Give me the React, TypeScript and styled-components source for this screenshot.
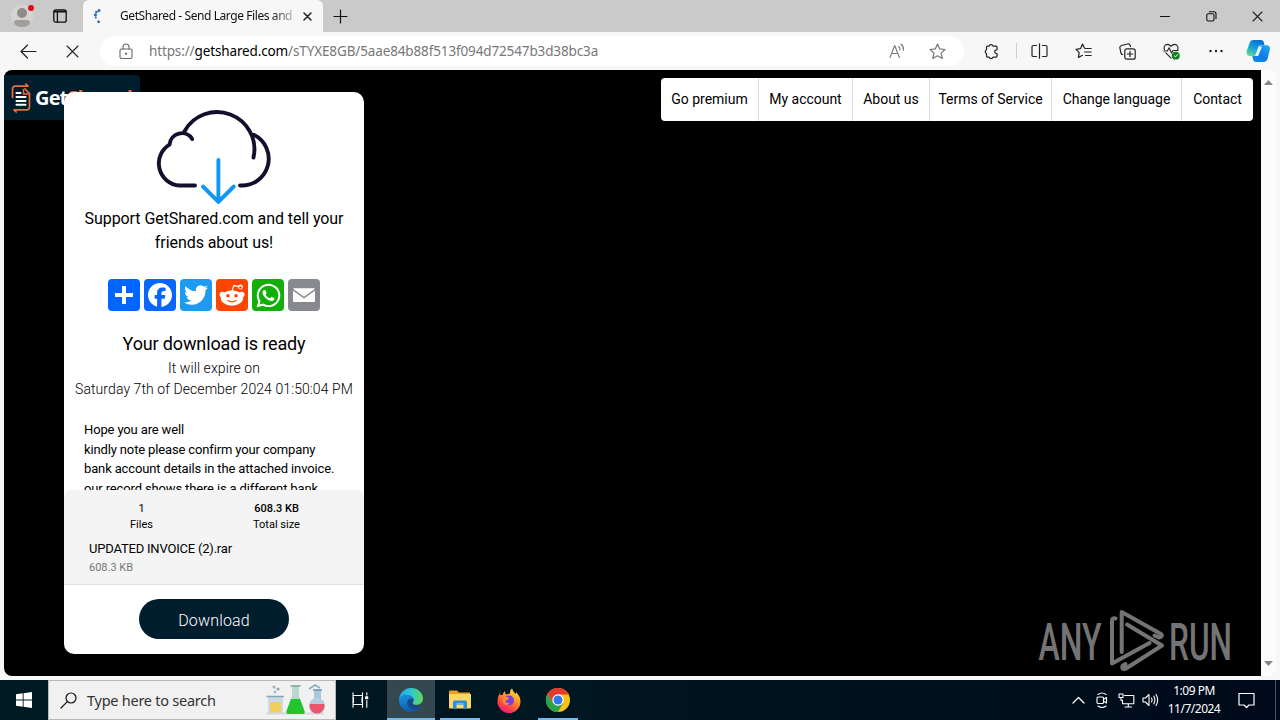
import React from "react";
import styled, { createGlobalStyle } from "styled-components";
import { FaWhatsapp } from "react-icons/fa";

const GlobalStyle = createGlobalStyle`
  * { box-sizing: border-box; }
  body { margin: 0; overflow: hidden; }
  svg { display: block; flex: none; }
`;

const segoe = `"Noto Sans", "Open Sans", sans-serif`;
const roboto = `Roboto, sans-serif`;

const Screen = styled.div`
  width: 1280px;
  height: 720px;
  display: flex;
  flex-direction: column;
  overflow: hidden;
  background: #f7f7f7;
  font-family: ${segoe};
  color: #000;
`;

/* Browser chrome */

const TabStrip = styled.div`
  height: 32px;
  display: flex;
  background: #cacaca;
`;

const Slot = styled.div<{ $w: number }>`
  width: ${(p) => p.$w}px;
  flex: none;
  display: flex;
  align-items: center;
  justify-content: center;
`;

const Tab = styled.div`
  width: 240px;
  margin-left: 7px;
  padding: 0 8px 0 6px;
  display: flex;
  align-items: center;
  background: #f7f7f7;
  border-radius: 6px 6px 0 0;
`;

const TabTitle = styled.div`
  width: 173px;
  margin: 0 7px 0 15px;
  overflow: hidden;
  white-space: nowrap;
  font-size: 12px;
  line-height: 20px;
  letter-spacing: -0.42px;
  background: linear-gradient(90deg, #111 88%, #bbb 100%);
  background-clip: text;
  color: transparent;
`;

const Spacer = styled.div`
  flex: 1;
`;

const Toolbar = styled.div`
  height: 38px;
  display: flex;
  align-items: center;
  padding-left: 6px;
`;

const AddressBar = styled.div`
  width: 864px;
  height: 30px;
  margin: 0 5px 0 6px;
  display: flex;
  align-items: center;
  border-radius: 15px;
  background: #fff;
`;

const Url = styled.div`
  flex: 1;
  margin-left: -3px;
  font-size: 13.5px;
  line-height: 20px;
  letter-spacing: -0.13px;
  color: #777;
  white-space: nowrap;
  b {
    font-weight: 400;
    color: #000;
  }
`;

const ToolDivider = styled.div`
  width: 1px;
  height: 16px;
  margin: 0 1px 0 3px;
  background: #cfcfcf;
`;

/* Page */

const ViewRow = styled.div`
  height: 606px;
  margin: 0 4px 4px;
  display: flex;
  border-radius: 8px;
  overflow: hidden;
`;

const Page = styled.div`
  position: relative;
  width: 1257px;
  background: #000;
  font-family: ${roboto};
`;

const ScrollBar = styled.div`
  width: 15px;
  display: flex;
  flex-direction: column;
  justify-content: space-between;
  align-items: center;
  padding: 10px 0;
  background: #fcfcfc;
`;

const PageHeader = styled.header`
  display: flex;
  justify-content: space-between;
  align-items: flex-start;
  padding: 5px 8px 0 0;
`;

const Logo = styled.div`
  width: 136px;
  height: 45px;
  display: flex;
  align-items: center;
  gap: 2px;
  padding: 0 7px;
  background: #001d2e;
  border-radius: 0 4px 4px 0;
  font: 700 20px/45px "Open Sans", sans-serif;
  letter-spacing: -0.85px;
  color: #fff;
  em {
    font-style: normal;
    color: #f0683a;
  }
`;

const Nav = styled.nav`
  display: flex;
  height: 43px;
  margin-top: 3px;
  background: #fff;
  border-radius: 4px;
  overflow: hidden;
`;

const NavItem = styled.a<{ $w: number }>`
  width: ${(p) => p.$w}px;
  text-align: center;
  font-size: 14px;
  line-height: 43px;
  letter-spacing: -0.03px;
  white-space: nowrap;
  & + & {
    border-left: 1px solid #dcdcdc;
  }
`;

const Card = styled.section`
  position: absolute;
  left: 60px;
  top: 22px;
  width: 300px;
  height: 562px;
  display: flex;
  flex-direction: column;
  background: #fff;
  border-radius: 10px;
  overflow: hidden;
`;

const CardTop = styled.div`
  height: 398px;
  flex: none;
  padding-top: 16px;
  overflow: hidden;
  display: flex;
  flex-direction: column;
  align-items: center;
`;

const Support = styled.p`
  width: 280px;
  margin: 1px 0 24px;
  text-align: center;
  font-size: 16px;
  line-height: 24px;
  letter-spacing: -0.07px;
`;

const Shares = styled.div`
  display: flex;
  gap: 4px;
`;

const Share = styled.div<{ $bg: string }>`
  width: 32px;
  height: 32px;
  display: flex;
  align-items: center;
  justify-content: center;
  border-radius: 4px;
  background: ${(p) => p.$bg};
`;

const Ready = styled.h1`
  margin: 20px 0 0;
  font-size: 18px;
  line-height: 26px;
  font-weight: 400;
  letter-spacing: -0.14px;
`;

const Expire = styled.div`
  margin-top: 1px;
  font-size: 14px;
  font-weight: 300;
  line-height: 21px;
  letter-spacing: 0.08px;
  text-align: center;
  white-space: nowrap;
`;

const Message = styled.div`
  align-self: stretch;
  margin: 20px 20px 0;
  font-size: 13px;
  line-height: 19.5px;
  letter-spacing: -0.14px;
  white-space: nowrap;
`;

const Files = styled.div`
  height: 95px;
  flex: none;
  padding: 11px 20px 0 10px;
  background: #f4f4f4;
  border-bottom: 1px solid #e0e0e0;
  border-radius: 8px 8px 0 0;
`;

const Stats = styled.div`
  display: flex;
`;

const Stat = styled.div`
  width: 135px;
  text-align: center;
  font-size: 11px;
  line-height: 16px;
  b {
    display: block;
    font-weight: 500;
  }
  i {
    display: block;
    font-style: normal;
  }
`;

const FileName = styled.div`
  margin: 6px 0 0 15px;
  font-size: 13px;
  line-height: 19px;
  letter-spacing: -0.2px;
`;

const FileSize = styled.div`
  margin: 1px 0 0 15px;
  font-size: 11px;
  line-height: 18px;
  color: #777;
`;

const DownloadButton = styled.button`
  width: 150px;
  height: 40px;
  margin: 14px auto 0;
  border: 0;
  border-radius: 20px;
  background: #001d2e;
  color: #fff;
  font: 300 16px/41px ${roboto};
  letter-spacing: 0.15px;
  padding: 1px 0 0;
`;

const Watermark = styled.div`
  position: absolute;
  left: 1032px;
  top: 536px;
`;

/* Taskbar */

const Taskbar = styled.div`
  height: 40px;
  display: flex;
  background: linear-gradient(90deg, #001a24 0%, #001620 45%, #000a1a 100%);
`;

const Search = styled.div`
  width: 288px;
  display: flex;
  align-items: center;
  padding-left: 11px;
  background: #f1f1f1;
  border: 1px solid #b9b9b9;
  color: #333;
  font-size: 14.5px;
  white-space: nowrap;
`;

const SearchText = styled.span`
  width: 177px;
  margin-left: 10px;
  letter-spacing: -0.25px;
`;

const TaskApp = styled.div<{ $active?: boolean; $line?: boolean; $gap?: number }>`
  width: ${(p) => (p.$active ? 48 : 40)}px;
  margin-left: ${(p) => p.$gap ?? 0}px;
  display: flex;
  align-items: center;
  justify-content: center;
  background: ${(p) => (p.$active ? "#33484f" : "transparent")};
  border-bottom: 2px solid ${(p) => (p.$line ? "#76b9ed" : "transparent")};
  padding-top: 2px;
`;

const Clock = styled.div`
  width: 64px;
  padding-top: 2px;
  text-align: center;
  color: #fff;
  font-size: 12px;
  line-height: 18px;
  letter-spacing: -0.5px;
  white-space: nowrap;
`;

const Peek = styled.div`
  width: 5px;
  margin-left: 5px;
  border-left: 1px solid #4a5563;
`;

type LineProps = { w: number; h: number; c?: string; s?: number; children: React.ReactNode };
const Line = ({ w, h, c = "#222", s = 1.2, children }: LineProps) => (
  <svg width={w} height={h} viewBox={`0 0 ${w} ${h}`} fill="none" stroke={c} strokeWidth={s} strokeLinecap="round" strokeLinejoin="round">
    {children}
  </svg>
);

const Cross = ({ size, s = 1.2 }: { size: number; s?: number }) => (
  <Line w={size} h={size} s={s}>
    <path d={`M1 1 L${size - 1} ${size - 1} M${size - 1} 1 L1 ${size - 1}`} />
  </Line>
);

const BrowserTabs = () => (
  <TabStrip>
    <Slot $w={44}>
      <svg width="24" height="26" viewBox="0 0 24 26">
        <circle cx="12" cy="13" r="11" fill="#d6d3d1" />
        <circle cx="12" cy="10" r="5" fill="#8e8b88" />
        <path d="M4 20q0-3 3-3h10q3 0 3 3q-2 4-8 4t-8-4Z" fill="#a09d9a" />
        <circle cx="21" cy="5" r="3" fill="#e00b1c" />
      </svg>
    </Slot>
    <Slot $w={32}>
      <Line w={14} h={14} c="#111" s={1.3}>
        <rect x="0.8" y="0.8" width="12.4" height="12.4" rx="2" />
        <path d="M1.500 2.500h11" strokeWidth="2.200" />
        <path d="M4.400 3v10" />
      </Line>
    </Slot>
    <Tab>
      <svg width="16" height="16" viewBox="0 0 16 16" fill="#2a6db0">
        <circle cx="10" cy="2.600" r="1.500" />
        <circle cx="7.400" cy="4" r="1.300" />
        <circle cx="6.400" cy="6.800" r="1.600" />
        <circle cx="6.800" cy="9.600" r="1" />
        <circle cx="9.600" cy="13.800" r="1.400" />
      </svg>
      <TabTitle>GetShared - Send Large Files and</TabTitle>
      <Slot $w={15}>
        <Cross size={9} s={1.5} />
      </Slot>
    </Tab>
    <Slot $w={34}>
      <Line w={15} h={15} c="#111" s={1.2}>
        <path d="M7.500 1v13M1 7.500h13" />
      </Line>
    </Slot>
    <Spacer />
    <Slot $w={46}>
      <Line w={10} h={10} c="#111" s={1}>
        <path d="M0.500 5.500h9" />
      </Line>
    </Slot>
    <Slot $w={46}>
      <Line w={11} h={11} c="#111" s={1.1}>
        <rect x="0.800" y="2.800" width="7.200" height="7.200" rx="1.500" />
        <path d="M3.200 0.800H7.800q2.200 0 2.200 2.200V7.600" />
      </Line>
    </Slot>
    <Slot $w={46}>
      <Cross size={11} s={1.1} />
    </Slot>
  </TabStrip>
);

const Copilot = () => (
  <svg width="26" height="24" viewBox="0 0 26 24">
    <defs>
      <linearGradient id="cpA" x1="0.6" y1="0" x2="0.2" y2="1">
        <stop offset="0" stopColor="#0c6fc8" />
        <stop offset="0.5" stopColor="#17a2dd" />
        <stop offset="1" stopColor="#5fdc8e" />
      </linearGradient>
      <linearGradient id="cpB" x1="0.8" y1="0" x2="0.2" y2="1">
        <stop offset="0" stopColor="#1fa6f2" />
        <stop offset="0.6" stopColor="#1178e8" />
        <stop offset="1" stopColor="#0a8de6" />
      </linearGradient>
    </defs>
    <path d="M8.500 1h7.600q2 0 2.600 2l.9 3.200h-3.400q-2.400 0-3.100 2.300l-2 6.300q-.7 2.200-3 2.200H5Q1.100 17 1.600 12.600L4.400 4.400Q5.400 1 8.500 1Z" fill="url(#cpA)" />
    <path d="M18.500 23H11q-2.200 0-2.800-2l-.9-4h1.500q2.600 0 3.300-2.300l2-6.300q.7-2.200 3-2.200h4.600q3.800.2 3.200 4.400l-2.300 9Q21.700 23 18.500 23Z" fill="url(#cpB)" />
    <path d="M14 7.800h3L13.200 17h-3Z" fill="#e7f4fc" />
  </svg>
);

const BrowserToolbar = () => (
  <Toolbar>
    <Slot $w={44}>
      <Line w={17} h={15} s={1.2}>
        <path d="M16 7.500H1M7.500 1L1 7.500L7.500 14" />
      </Line>
    </Slot>
    <Slot $w={44}>
      <Cross size={13} s={1.1} />
    </Slot>
    <AddressBar>
      <Slot $w={52}>
        <Line w={14} h={17} c="#666" s={1.1}>
          <rect x="1" y="6" width="12" height="9.500" rx="1.500" />
          <path d="M4 6V4a3 3 0 0 1 6 0V6" />
          <circle cx="7" cy="10.700" r="0.600" fill="#666" />
        </Line>
      </Slot>
      <Url>
        https://<b>getshared.com</b>/sTYXE8GB/5aae84b88f513f094d72547b3d38bc3a
      </Url>
      <Slot $w={40}>
        <Line w={17} h={16} c="#777" s={1.1}>
          <path d="M1 14.500L5.700 2.500L10.400 14.500M2.600 10.500H8.800M9.800 3.500q1.300 1.300 1.100 3.500M12 1.200q2.900 2.300 2.500 6" />
        </Line>
      </Slot>
      <Slot $w={40}>
        <Line w={17} h={17} c="#777" s={1.2}>
          <path d="M8.500 1L10.700 5.900L16 6.500L12 10.100L13.200 15.500L8.500 12.800L3.800 15.500L5 10.100L1 6.500L6.300 5.900Z" />
        </Line>
      </Slot>
      <Slot $w={7} />
    </AddressBar>
    <Slot $w={44}>
      <Line w={16} h={17} s={1.2}>
        <path d="M4.500 3.200h1.600a2 2 0 0 1 3.900 0h3q1 0 1 1v2.600a1.900 1.900 0 1 0 0 3.700v2.600q0 1-1 1h-3a2 2 0 0 1-3.900 0H4.500q-1 0-1-1v-2.600a2 2 0 0 1 0-3.700V4.200q0-1 1-1Z" />
      </Line>
    </Slot>
    <ToolDivider />
    <Slot $w={43}>
      <Line w={17} h={16} s={1.2}>
        <path d="M8.500 0.800V15.200M5.500 2.500H2.300Q1 2.500 1 3.800V12.200Q1 13.500 2.300 13.500H5.500M11.500 2.500H14.700Q16 2.500 16 3.800V12.200Q16 13.500 14.700 13.500H11.500" />
      </Line>
    </Slot>
    <Slot $w={44}>
      <Line w={17} h={16} s={1.2}>
        <path d="M9.500 5.200L7.500 1L5.500 5.700L1 6.300L4.200 9.600L3.400 14.500L7.500 12.300M10.500 5.500H16.200M9.500 9H16.200M10.500 12.500H16.200" />
      </Line>
    </Slot>
    <Slot $w={44}>
      <Line w={17} h={17} s={1.2}>
        <rect x="5.800" y="5.800" width="10.400" height="10.400" rx="2" />
        <path d="M11 8.300V13.700M8.300 11H13.700M3.800 11.500Q2.300 11.500 1.900 10L.9 5Q.6 3 2.500 2.500L8.500 1Q10.500 .6 11.200 2.500L11.500 3.500" />
      </Line>
    </Slot>
    <Slot $w={45}>
      <svg width="17" height="17" viewBox="0 0 18 18" fill="none" stroke="#222" strokeWidth="1.200" strokeLinecap="round" strokeLinejoin="round">
        <path d="M1.500 7Q.4 4 2.600 2.200Q5.500 .3 8.500 3.500Q11.500 .3 14.400 2.200Q16.600 4 15.500 7M1 8.500H4.500L6.500 5L9 10.500L10.500 8H16M3 10.500L8.500 16" />
        <circle cx="13.500" cy="13.400" r="4.200" fill="#10801a" stroke="none" />
        <path d="M12 13.600L13.200 14.700L15.500 12.200" stroke="#fff" strokeWidth="1" />
      </svg>
    </Slot>
    <Slot $w={44}>
      <svg width="16" height="4" viewBox="0 0 16 4" fill="#222">
        <circle cx="2.500" cy="2" r="1.200" />
        <circle cx="8" cy="2" r="1.200" />
        <circle cx="13.500" cy="2" r="1.200" />
      </svg>
    </Slot>
    <Slot $w={40}>
      <Copilot />
    </Slot>
  </Toolbar>
);

const navItems: [string, number][] = [
  ["Go premium", 97],
  ["My account", 94],
  ["About us", 77],
  ["Terms of Service", 122],
  ["Change language", 130],
  ["Contact", 72],
];

const CloudDownload = () => (
  <svg width="120" height="98" viewBox="154.500 108.500 120 98" fill="none" stroke="#150f2e" strokeWidth="3.900" strokeLinecap="round" strokeLinejoin="round">
    <path d="M185 131.700A37.300 37.300 0 0 1 254 158" />
    <path d="M192.700 139.500A12.300 12.300 0 0 0 170 145.200A22 22 0 0 0 180 186H195.500" />
    <path d="M254.200 135.200A26.800 26.800 0 0 1 240.500 186" />
    <path d="M218.900 160.500V202.500M203.500 187L218.900 202.300L234.300 187" stroke="#1097f5" />
  </svg>
);

const ShareButtons = () => (
  <Shares>
    <Share $bg="#0166ff">
      <svg width="32" height="32" viewBox="0 0 32 32" fill="#fff">
        <path d="M14 7h4v18h-4z" />
        <path d="M7 14h18v4H7z" />
      </svg>
    </Share>
    <Share $bg="#0866ff">
      <svg width="32" height="32" viewBox="0 0 32 32" fill="#fff">
        <path d="M28 16c0-6.627-5.373-12-12-12S4 9.373 4 16c0 5.628 3.875 10.350 9.101 11.647v-7.980h-2.474V16H13.100v-1.580c0-4.085 1.849-5.978 5.859-5.978.76 0 2.072.15 2.608.298v3.325c-.283-.03-.775-.045-1.386-.045-1.967 0-2.728.745-2.728 2.683V16h3.920l-.673 3.667h-3.247v8.245C23.395 27.195 28 22.135 28 16" />
      </svg>
    </Share>
    <Share $bg="#1d9bf0">
      <svg width="32" height="32" viewBox="0 0 32 32" fill="#fff">
        <path d="M28 8.557a10 10 0 0 1-2.828.775 4.930 4.930 0 0 0 2.166-2.725 9.700 9.700 0 0 1-3.130 1.194 4.920 4.920 0 0 0-3.593-1.550 4.924 4.924 0 0 0-4.794 6.049c-4.090-.21-7.720-2.170-10.150-5.150a4.940 4.940 0 0 0-.665 2.477c0 1.710.87 3.214 2.190 4.100a5 5 0 0 1-2.230-.616v.06c0 2.390 1.700 4.380 3.952 4.830-.414.115-.85.174-1.297.174q-.476-.001-.928-.086a4.935 4.935 0 0 0 4.600 3.420 9.900 9.900 0 0 1-6.114 2.107q-.597 0-1.175-.068a13.950 13.950 0 0 0 7.550 2.213c9.056 0 14.010-7.507 14.010-14.013q0-.32-.015-.637c.96-.695 1.795-1.560 2.455-2.550z" />
      </svg>
    </Share>
    <Share $bg="#ff4500">
      <svg width="32" height="32" viewBox="0 0 32 32" fill="#fff">
        <path d="M28.543 15.774a2.953 2.953 0 0 0-2.951-2.949 2.880 2.880 0 0 0-1.900.713 14.100 14.100 0 0 0-6.850-2.044l1.380-4.349 3.768.884a2.452 2.452 0 1 0 .24-1.176l-4.274-1a.6.6 0 0 0-.709.4l-1.659 5.224a14.300 14.300 0 0 0-7.316 2.029 2.900 2.900 0 0 0-1.872-.681 2.942 2.942 0 0 0-1.618 5.400 5 5 0 0 0-.062.765c0 4.158 5.037 7.541 11.229 7.541s11.220-3.383 11.220-7.541a5 5 0 0 0-.053-.706 2.960 2.960 0 0 0 1.427-2.510" />
        <g fill="#ff4500">
          <circle cx="24.400" cy="8.400" r="1.250" />
          <circle cx="12" cy="16.800" r="1.750" />
          <circle cx="20" cy="16.800" r="1.750" />
        </g>
        <path d="M12 21.500q4 2.600 8 0" fill="none" stroke="#ff4500" strokeWidth="1.300" strokeLinecap="round" />
      </svg>
    </Share>
    <Share $bg="#12af0a">
      <FaWhatsapp size={27} color="#fff" />
    </Share>
    <Share $bg="#888990">
      <svg width="32" height="32" viewBox="0 0 32 32" fill="#fff">
        <path d="M5.500 9.200H26.500V10.300L16 17.800L5.500 10.300Z" />
        <path d="M5 11.700L16 19.500L27 11.700V22Q27 23 26 23H6Q5 23 5 22Z" />
      </svg>
    </Share>
  </Shares>
);

const LogoMark = () => (
  <svg width="22" height="30" viewBox="0 0 22 30" fill="none" strokeLinecap="round" strokeLinejoin="round">
    <path d="M1.500 14.500V6Q1.500 3.200 4.300 3.200H16.500M14.800 1L17 3.200M3 26.800H15.700Q18.500 26.800 18.500 24V10.500L14 5.800M3 26.800L5.200 29" stroke="#ee6b3d" strokeWidth="1.700" />
    <path d="M12.500 6.500V11H17.500" stroke="#ee6b3d" strokeWidth="1.500" />
    <path d="M5.500 10H9.500M5.500 14H14.500M5.500 18H14.500M5.500 21.800H14.500" stroke="#fff" strokeWidth="2" />
  </svg>
);

const AnyRun = () => (
  <svg width="200" height="68" viewBox="1036 606 200 68" fill="#747474">
    <text x="1038.500" y="659.500" fontFamily="Roboto, sans-serif" fontWeight="500" fontSize="52" textLength="63" lengthAdjust="spacingAndGlyphs">ANY</text>
    <text x="1169" y="659.500" fontFamily="Roboto, sans-serif" fontWeight="500" fontSize="52" textLength="63" lengthAdjust="spacingAndGlyphs">RUN</text>
    <g fill="none" stroke="#747474" strokeWidth="4" strokeLinejoin="round" strokeLinecap="round">
      <path d="M1115.500 618.500Q1112 617.500 1112 621V663.500L1149.500 643" />
      <path d="M1121.700 652V612L1161 634Q1163.500 636.500 1159 637.500L1154.500 635.500" />
      <path d="M1127 624.500L1162 645.500L1126 668.500Q1121.500 670 1122.500 666L1125.500 664" />
    </g>
  </svg>
);

const WebPage = () => (
  <Page>
    <PageHeader>
      <Logo>
        <LogoMark />
        <span>
          Get<em>Shared</em>
        </span>
      </Logo>
      <Nav>
        {navItems.map(([label, w]) => (
          <NavItem key={label} $w={w}>
            {label}
          </NavItem>
        ))}
      </Nav>
    </PageHeader>
    <Watermark>
      <AnyRun />
    </Watermark>
    <Card>
      <CardTop>
        <CloudDownload />
        <Support>
          Support GetShared.com and tell your
          <br />
          friends about us!
        </Support>
        <ShareButtons />
        <Ready>Your download is ready</Ready>
        <Expire>
          It will expire on
          <br />
          Saturday 7th of December 2024 01:50:04 PM
        </Expire>
        <Message>
          Hope you are well
          <br />
          kindly note please confirm your company
          <br />
          bank account details in the attached invoice.
          <br />
          our record shows there is a different bank
        </Message>
      </CardTop>
      <Files>
        <Stats>
          <Stat>
            <i>1</i>
            <i>Files</i>
          </Stat>
          <Stat>
            <b>608.3 KB</b>
            <i>Total size</i>
          </Stat>
        </Stats>
        <FileName>UPDATED INVOICE (2).rar</FileName>
        <FileSize>608.3 KB</FileSize>
      </Files>
      <DownloadButton>Download</DownloadButton>
    </Card>
  </Page>
);

const Flasks = () => (
  <svg width="64" height="34" viewBox="264 684 64 34">
    <path d="M266 714.500H324" stroke="#d5d9dc" strokeWidth="2" />
    <path d="M268 697h15v16q0 2-2 2h-11q-2 0-2-2Z" fill="#c9dbe6" />
    <path d="M270 703h11v9q0 1.500-1.500 1.500h-8q-1.500 0-1.500-1.500Z" fill="#f5cd5a" />
    <path d="M266.500 697.500h17.500" stroke="#8aa5b5" strokeWidth="1.500" />
    <circle cx="274" cy="688" r="1.600" fill="#9fb4c4" />
    <circle cx="278" cy="690" r="1.600" fill="#8fa6b8" />
    <circle cx="275" cy="693" r="1.500" fill="#a9bccb" />
    <path d="M292 687h7v10l5.500 15q.8 3-2 3h-14q-2.800 0-2-3l5.500-15Z" fill="#b9d8cf" />
    <path d="M291 700h9l4.500 12q.8 3-2 3h-14q-2.800 0-2-3Z" fill="#22c52c" />
    <path d="M290.500 687h10" stroke="#8ba7a9" strokeWidth="1.700" />
    <path d="M314 690h7v12h-7Z" fill="#a9c6dc" />
    <circle cx="317" cy="707" r="8" fill="#b7cddd" />
    <path d="M309.800 705h14.500a7.500 7.500 0 1 1-14.500 0Z" fill="#ec5468" />
    <path d="M309 690L315 686L320 689" fill="none" stroke="#8fb0c4" strokeWidth="1.700" />
    <path d="M313 691h9" stroke="#7799b2" strokeWidth="1.500" />
  </svg>
);

const EdgeIcon = () => (
  <svg width="26" height="26" viewBox="0 0 26 26">
    <defs>
      <linearGradient id="edA" x1="0" y1="0.500" x2="1" y2="0.500">
        <stop offset="0" stopColor="#1f9fe0" />
        <stop offset="0.500" stopColor="#2fc6d8" />
        <stop offset="1" stopColor="#62d84e" />
      </linearGradient>
      <linearGradient id="edB" x1="0.200" y1="0" x2="0.600" y2="1">
        <stop offset="0" stopColor="#1a8fe0" />
        <stop offset="1" stopColor="#0f56a8" />
      </linearGradient>
    </defs>
    <path d="M1 12.500A12 12 0 0 1 13 1C20 1 25 6 25 11.500C25 15.500 22 17.800 18.500 17.800C15.500 17.800 14.300 16.700 14.800 15.700C15.700 14.300 16 13.500 15.500 12C14.500 9 11 7.800 7.500 8Q3 8.500 1 12.500Z" fill="url(#edA)" />
    <path d="M1 12.500Q3 8 8 8C12 8 15 10 15.500 12.500Q11 10.500 9.500 14.500C8.500 18.500 12 22.500 17 22.500Q20.500 22.500 23 19.500Q19.500 25 13 25A12 12 0 0 1 1 12.500Z" fill="url(#edB)" />
    <path d="M15.300 12Q10.500 11 9.500 14.500C8.500 18.500 12 22.500 17 22.300Q20.500 22.300 23 19.300Q20 20 17 19C14 18 12.500 15 15.300 12Z" fill="#134a8c" />
  </svg>
);

const FolderIcon = () => (
  <svg width="22" height="20" viewBox="0 0 22 20">
    <path d="M0 1.500Q0 .5 1 .5H8L10 2.500H21V6H0Z" fill="#e8a020" />
    <path d="M0 4H22V17.500Q22 18.500 21 18.500H1Q0 18.500 0 17.500Z" fill="#fbd768" />
    <path d="M4 19V12Q4 10.500 5.500 10.500H16.500Q18 10.500 18 12V19H14.500V15H7.500V19Z" fill="#2f8fd4" />
    <path d="M7.500 13h7v2h-7z" fill="#6db8e8" />
  </svg>
);

const FirefoxIcon = () => (
  <svg width="24" height="25" viewBox="0 0 24 25">
    <defs>
      <linearGradient id="ffA" x1="0.800" y1="0" x2="0.250" y2="1">
        <stop offset="0" stopColor="#ffe93a" />
        <stop offset="0.350" stopColor="#ffa028" />
        <stop offset="0.700" stopColor="#ff4a3e" />
        <stop offset="1" stopColor="#e31587" />
      </linearGradient>
    </defs>
    <path d="M3.500 4.500Q3 6 3.300 7L5.500 7Q6 4.500 8 3Q7.800 5 9 6.500L13 5.500Q12.500 2.500 15 .5Q16 4 19 6Q19.300 5 19 4Q23.500 8.500 23.500 13.500A11.500 11.500 0 0 1 .5 13.500Q.5 8 3.500 4.500Z" fill="url(#ffA)" />
    <circle cx="12" cy="12.500" r="5" fill="#7a3fd8" />
    <path d="M6 9.500Q9 8 11.500 9.500Q13 10.500 11 11.500Q8.500 12 8.300 14Q10 15.500 12.500 14.800Q11 18 7.500 16.500Q4.500 13.500 6 9.500Z" fill="#ff8a30" />
  </svg>
);

const ChromeIcon = () => (
  <svg width="24" height="24" viewBox="0 0 24 24">
    <circle cx="12" cy="12" r="12" fill="#fbc116" />
    <path d="M12 6.500H22.700A12 12 0 0 0 1.600 6L7 15Z" fill="#e33b2e" />
    <path d="M1.600 6A12 12 0 0 0 12 24L17 15H7Z" fill="#2ba24c" />
    <circle cx="12" cy="12" r="5.700" fill="#fff" />
    <circle cx="12" cy="12" r="4.500" fill="#2f78ee" />
  </svg>
);

const WindowsTaskbar = () => (
  <Taskbar>
    <Slot $w={48}>
      <svg width="16" height="16" viewBox="0 0 16 16" fill="#fff">
        <path d="M0 2.200L6.700 1.300V7.500H0ZM7.600 1.200L16 0V7.500H7.600ZM0 8.500H6.700V14.700L0 13.800ZM7.600 8.500H16V16L7.600 14.800Z" />
      </svg>
    </Slot>
    <Search>
      <Line w={17} h={17} c="#111" s={1.2}>
        <circle cx="11" cy="6" r="5" />
        <path d="M7.300 9.700L1 16" />
      </Line>
      <SearchText>Type here to search</SearchText>
      <Flasks />
    </Search>
    <Slot $w={48}>
      <Line w={17} h={16} c="#fff" s={1.1}>
        <path d="M1 .8V3.500H10.500V.8M1 15.200V12.500H10.500V15.200M1.500 5.500V10.500M10 5.500V10.500M1 3.500V12.500M10.500 3.500V12.500M14.800 .8V3M14.800 8.500V15.200" />
        <rect x="13.700" y="4.800" width="2" height="2" fill="#fff" />
      </Line>
    </Slot>
    <TaskApp $active $line $gap={3}>
      <EdgeIcon />
    </TaskApp>
    <TaskApp $line $gap={5}>
      <FolderIcon />
    </TaskApp>
    <TaskApp $gap={9}>
      <FirefoxIcon />
    </TaskApp>
    <TaskApp $line $gap={9}>
      <ChromeIcon />
    </TaskApp>
    <Spacer />
    <Slot $w={24}>
      <Line w={13} h={8} c="#fff" s={1.3}>
        <path d="M1 7L6.500 1.500L12 7" />
      </Line>
    </Slot>
    <Slot $w={24}>
      <Line w={12} h={16} c="#fff" s={1.1}>
        <rect x="1" y="5" width="6.500" height="6.500" rx="1" />
        <path d="M7.500 7.300L10.500 5.500V11L7.500 9.300M2 2.500Q6 -.5 10 2.500M2 14Q6 17 10 14" />
      </Line>
    </Slot>
    <Slot $w={24}>
      <Line w={17} h={15} c="#fff" s={1.1}>
        <path d="M6.500 2.500H15.800V10.800H4.500V7M10.300 10.800V14M7 14H13.500M1 1H5V4.500H1ZM3 4.500V7.500H4.500" />
      </Line>
    </Slot>
    <Slot $w={24}>
      <Line w={17} h={14} c="#fff" s={1.1}>
        <path d="M1 5V9H3.500L7 12.500V1.500L3.500 5ZM9.500 5Q10.700 7 9.500 9M11.800 3.200Q14 7 11.800 10.800M14 1.500Q17.400 7 14 12.500" />
      </Line>
    </Slot>
    <Clock>
      1:09 PM
      <br />
      11/7/2024
    </Clock>
    <Slot $w={40}>
      <Line w={17} h={17} c="#fff" s={1.2}>
        <path d="M1 1.500H16V13H11L8.500 15.500L6 13H1Z" />
      </Line>
    </Slot>
    <Slot $w={4} />
    <Peek />
  </Taskbar>
);

export default function App() {
  return (
    <Screen>
      <GlobalStyle />
      <BrowserTabs />
      <BrowserToolbar />
      <ViewRow>
        <WebPage />
        <ScrollBar>
          <svg width="9" height="5" viewBox="0 0 9 5" fill="#858585">
            <path d="M0 5L4.500 0L9 5Z" />
          </svg>
          <svg width="9" height="5" viewBox="0 0 9 5" fill="#858585">
            <path d="M0 0L4.500 5L9 0Z" />
          </svg>
        </ScrollBar>
      </ViewRow>
      <WindowsTaskbar />
    </Screen>
  );
}
